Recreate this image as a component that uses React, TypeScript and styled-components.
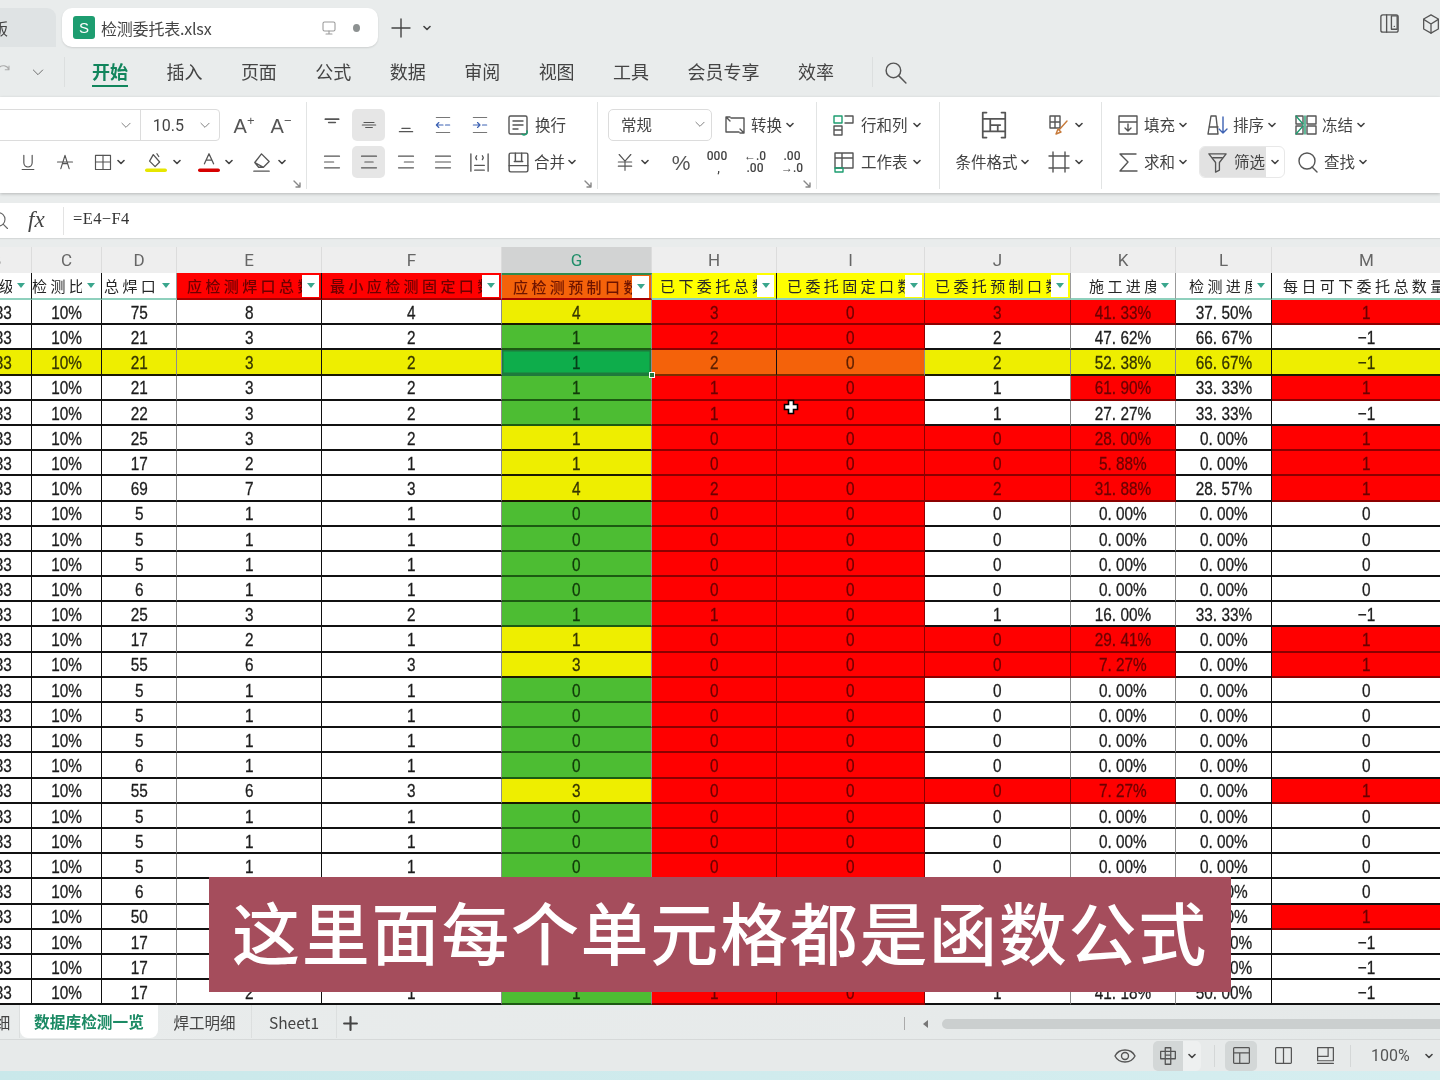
import React from 'react';
import styled, { createGlobalStyle } from 'styled-components';

const CJK = '"Noto Sans CJK SC", "Noto Sans", sans-serif';

const Global = createGlobalStyle`
  html, body { margin: 0; padding: 0; background: #e9ecec; }
  * { box-sizing: border-box; }
`;

const Page = styled.div`
  position: relative;
  width: 1440px;
  height: 1080px;
  overflow: hidden;
  display: flex;
  flex-direction: column;
  background: #e9ecec;
  font-family: ${CJK};
  color: #444;
  filter: blur(0.35px);
`;

const Svg = styled.svg<{ $c?: string }>`
  flex: none;
  fill: none;
  stroke: ${p => p.$c || '#555'};
  stroke-width: 1.4;
  stroke-linecap: round;
  stroke-linejoin: round;
`;

const Ico = ({ s = 22, c, children }: { s?: number; c?: string; children: React.ReactNode }) => (
  <Svg width={s} height={s} viewBox="0 0 24 24" $c={c}>{children}</Svg>
);

const Caret = () => (
  <Svg width={8} height={6} viewBox="0 0 8 6" $c="#444" style={{ strokeWidth: 1.6 }}><path d="M1 1.5 L4 4.5 L7 1.5" /></Svg>
);

const Chevron = ({ s = 14 }: { s?: number }) => (
  <Ico s={s} c="#666"><path d="M5 9l7 7 7-7" /></Ico>
);

/* ---------- title bar ---------- */
const TitleBar = styled.div`
  height: 47px;
  flex: none;
  display: flex;
  align-items: flex-end;
`;
const OldTab = styled.div`
  width: 56px;
  height: 39px;
  background: #dfe3e4;
  border-radius: 0 9px 0 0;
  display: flex;
  align-items: center;
  overflow: hidden;
  font-size: 16px;
  span { margin-left: -8px; }
`;
const ActiveTab = styled.div`
  width: 316px;
  height: 39px;
  margin-left: 6px;
  background: #fff;
  border-radius: 10px;
  display: flex;
  align-items: center;
  padding-left: 11px;
  box-shadow: 0 1px 2px rgba(0, 0, 0, 0.12);
`;
const SheetLogo = styled.div`
  width: 22px;
  height: 23px;
  border-radius: 3px;
  background: #1d9d70;
  color: #fff;
  font: 15px "Liberation Sans", sans-serif;
  display: flex;
  align-items: center;
  justify-content: center;
`;
const TabTitle = styled.div`
  margin-left: 6px;
  width: 219px;
  font-size: 16px;
  letter-spacing: -0.2px;
  color: #444;
`;
const StatusDot = styled.div`
  width: 7px;
  height: 8px;
  border-radius: 50%;
  background: #8d9191;
  margin-left: 15px;
`;
const NewTab = styled.div`
  display: flex;
  align-items: center;
  gap: 10px;
  height: 39px;
  margin-left: 11px;
`;
const TitleRight = styled.div`
  margin-left: auto;
  height: 47px;
  display: flex;
  align-items: center;
  gap: 19px;
  margin-right: -2px;
`;

/* ---------- menu ---------- */
const MenuBar = styled.div`
  height: 50px;
  flex: none;
  display: flex;
  align-items: center;
`;
const QuickTools = styled.div`
  width: 65px;
  height: 30px;
  display: flex;
  align-items: center;
  gap: 18px;
  border-right: 1px solid #dcdfdf;
  svg:first-child { margin-left: -6px; }
`;
const MenuList = styled.div`
  display: flex;
  gap: 38.45px;
  margin-left: 27px;
  height: 50px;
  padding-bottom: 2px;
  align-items: center;
`;
const MenuItem = styled.div<{ $on?: boolean }>`
  position: relative;
  font-size: 18px;
  line-height: 24px;
  color: ${p => (p.$on ? '#11855c' : '#444')};
  font-weight: ${p => (p.$on ? 700 : 400)};
  &::after {
    content: '';
    display: ${p => (p.$on ? 'block' : 'none')};
    position: absolute;
    left: 0;
    right: 0;
    bottom: -4px;
    height: 2px;
    background: #11855c;
  }
`;
const MenuSearch = styled.div`
  margin-left: 38px;
  height: 30px;
  padding-left: 10px;
  border-left: 1px solid #dcdfdf;
  display: flex;
  align-items: center;
`;

/* ---------- ribbon ---------- */
const Ribbon = styled.div`
  height: 96px;
  flex: none;
  display: flex;
  background: #fff;
  box-shadow: 0 1px 3px rgba(0, 0, 0, 0.22);
  position: relative;
  overflow: hidden;
`;
const Group = styled.div<{ $w: number }>`
  position: relative;
  flex: none;
  width: ${p => p.$w}px;
  display: flex;
  flex-direction: column;
  gap: 5px;
  padding-top: 12px;
`;
const Sep = styled.div`
  flex: none;
  width: 1px;
  margin: 5px 0 4px;
  background: #e2e4e4;
`;
const ToolRow = styled.div`
  height: 32px;
  display: flex;
  align-items: center;
`;
const Slot = styled.div<{ $w?: number; $ml?: number; $on?: boolean; $gap?: number }>`
  flex: none;
  height: 32px;
  ${p => (p.$w ? `width:${p.$w}px;` : '')}
  margin-left: ${p => p.$ml || 0}px;
  display: flex;
  align-items: center;
  justify-content: ${p => (p.$w ? 'center' : 'flex-start')};
  gap: ${p => p.$gap ?? 4}px;
  border-radius: 5px;
  background: ${p => (p.$on ? '#e6e6e6' : 'transparent')};
`;
const ToolText = styled.span`
  font-size: 15.5px;
  line-height: 20px;
  margin-top: -2px;
  white-space: nowrap;
  color: #444;
`;
const Combo = styled.div`
  display: flex;
  height: 32px;
  margin-left: -10px;
  border: 1px solid #dcdcdc;
  border-radius: 4px;
`;
const ComboPart = styled.div<{ $w: number; $line?: boolean }>`
  width: ${p => p.$w}px;
  display: flex;
  align-items: center;
  justify-content: flex-end;
  padding-right: 7px;
  border-left: ${p => (p.$line ? '1px solid #dcdcdc' : 'none')};
  font: 16px Roboto, sans-serif;
  color: #444;
  span { margin-right: 14px; }
`;
const SelectBox = styled.div<{ $ml: number }>`
  margin-left: ${p => p.$ml}px;
  width: 104px;
  height: 32px;
  border: 1px solid #dcdcdc;
  border-radius: 5px;
  padding: 0 4px 2px 12px;
  display: flex;
  align-items: center;
  justify-content: space-between;
  font-size: 15.5px;
`;
const Launcher = styled.div`
  position: absolute;
  right: 4px;
  bottom: 4px;
  line-height: 0;
`;
const SplitButton = styled.div`
  margin-left: 12px;
  width: 86px;
  height: 32px;
  display: flex;
  border: 1px solid #e8e8e8;
  border-radius: 6px;
  overflow: hidden;
`;
const SplitMain = styled.div`
  width: 66px;
  background: #e2e2e2;
  display: flex;
  align-items: center;
  gap: 5px;
  padding-left: 6px;
`;
const SplitRest = styled.div`
  flex: 1;
  display: flex;
  align-items: center;
  justify-content: center;
`;
const LetterIcon = styled.span<{ $size?: number }>`
  font: ${p => p.$size || 18}px "Liberation Sans", sans-serif;
  color: #555;
  line-height: 1;
`;
const Glyph = styled.span<{ $size?: number }>`
  font: ${p => p.$size || 12}px/1 Roboto, sans-serif;
  color: #444;
  white-space: pre;
  text-align: center;
  font-weight: 500;
`;

/* ---------- formula ---------- */
const Band = styled.div<{ $h: number }>`
  height: ${p => p.$h}px;
  flex: none;
`;
const FormulaBar = styled.div`
  height: 35px;
  flex: none;
  background: #fff;
  display: flex;
  align-items: center;
  box-shadow: 0 1px 1px rgba(0, 0, 0, 0.08);
`;
const FormulaLeft = styled.div`
  width: 74px;
  height: 28px;
  margin-left: -10px;
  display: flex;
  align-items: center;
  gap: 18px;
  border-right: 1px solid #e3e3e3;
`;
const Fx = styled.span`
  font: italic 23px "Liberation Serif", serif;
  color: #444;
  margin-top: -2px;
`;
const FormulaText = styled.span`
  margin-left: 9px;
  margin-top: -3px;
  font: 16.5px "Liberation Serif", serif;
  letter-spacing: 0.4px;
  color: #333;
`;

/* ---------- sheet ---------- */
const COLS = '71px 70px 75px 145px 180px 150px 125px 148px 146px 105px 96px 190px';

const SheetArea = styled.div`
  position: relative;
  flex: none;
  height: 758px;
  overflow: hidden;
  background: #fff;
`;
const Grid = styled.div`
  width: 1501px;
  margin-left: -39px;
  display: grid;
  grid-template-columns: ${COLS};
  grid-template-rows: 26px 27px repeat(28, 25.2px);
`;
const ColLetter = styled.div<{ $on?: boolean }>`
  display: flex;
  align-items: center;
  justify-content: center;
  background: ${p => (p.$on ? '#d2d3d3' : '#eeeeee')};
  border-right: 1px solid #dcdcdc;
  color: ${p => (p.$on ? '#1f8d68' : '#666')};
  font: 17px Roboto, sans-serif;
`;
const HEAD: Record<string, string> = { w: '#ffffff', r: '#ff0000', o: '#f4620a', y: '#ffff00' };
const HeadCell = styled.div<{ $t: string; $pad: number; $dark?: boolean }>`
  min-width: 0;
  display: flex;
  align-items: center;
  padding: 0 2px 0 ${p => p.$pad}px;
  background: ${p => HEAD[p.$t]};
  border-right: 1px solid ${p => (p.$dark ? '#111' : '#9a9a9a')};
  border-bottom: 2px solid ${p => (p.$t === 'w' || p.$t === 'y' ? '#8fd0bd' : '#a80000')};
  ${p => (p.$t === 'o' ? 'border-top: 2px solid #2f8a4e;' : '')}
  color: ${p => (p.$t === 'r' ? '#6e0000' : p.$t === 'o' ? '#6e1400' : '#262626')};
  font-weight: ${p => (p.$t === 'r' || p.$t === 'o' ? 500 : 400)};
`;
const HeadText = styled.div`
  flex: 1;
  min-width: 0;
  overflow: hidden;
  white-space: nowrap;
  font-size: 15px;
  line-height: 22px;
  letter-spacing: 3.4px;
`;
const FilterBtn = styled.div`
  flex: none;
  width: 17px;
  height: 22px;
  background: #fff;
  display: flex;
  align-items: center;
  justify-content: center;
  &::after {
    content: '';
    width: 0;
    height: 0;
    border-left: 4px solid transparent;
    border-right: 4px solid transparent;
    border-top: 5px solid #3aa68d;
  }
`;
const TONE: Record<string, { bg: string; fg: string; line: string }> = {
  w: { bg: '#ffffff', fg: '#1c1c1c', line: '#111111' },
  r: { bg: '#ff0000', fg: '#6c0000', line: '#8c0000' },
  y: { bg: '#eeee00', fg: '#343400', line: '#1a1a00' },
  g: { bg: '#4dbd33', fg: '#113a09', line: '#1c5a12' },
  d: { bg: '#0ead4b', fg: '#063d1a', line: '#1e7a3c' },
  o: { bg: '#f4620a', fg: '#5c2000', line: '#7a3000' },
};
const Cell = styled.div<{ $t: string; $dark?: boolean; $sel?: boolean; $align?: string }>`
  position: relative;
  min-width: 0;
  display: flex;
  align-items: center;
  justify-content: center;
  padding-top: 3px;
  background: ${p => TONE[p.$t].bg};
  color: ${p => TONE[p.$t].fg};
  border-bottom: 2px solid ${p => TONE[p.$t].line};
  border-right: 1px solid ${p => (p.$t === 'r' ? '#8c0000' : p.$dark ? '#111' : '#8d8d8d')};
  ${p => (p.$sel ? 'box-shadow: inset 0 0 0 1.5px #1e7a3c;' : '')}
  ${p => (p.$align === 'end' ? 'justify-content: flex-end; padding-right: 17px;' : '')}
`;
const Num = styled.span`
  display: inline-block;
  font: 18.5px/1 "Liberation Sans", sans-serif;
  -webkit-text-stroke: 0.3px currentColor;
  transform: scaleX(0.83);
  white-space: pre;
`;
const FillHandle = styled.div`
  position: absolute;
  right: -4px;
  bottom: -4px;
  width: 6px;
  height: 6px;
  background: #1e7a3c;
  border: 1px solid #fff;
  z-index: 2;
`;
const Cursor = styled.svg`
  position: absolute;
  left: 783px;
  top: 152px;
  z-index: 3;
`;

/* ---------- bottom ---------- */
const SheetBar = styled.div`
  height: 35px;
  flex: none;
  display: flex;
  align-items: flex-start;
  border-bottom: 1px solid #d6d9d9;
  background: linear-gradient(90deg, #e9ecec, #e5e9e9);
`;
const SheetTab = styled.div<{ $on?: boolean; $w: number }>`
  flex: none;
  width: ${p => p.$w}px;
  height: 33px;
  display: flex;
  align-items: center;
  justify-content: center;
  overflow: hidden;
  font-size: ${p => (p.$on ? 15.7 : 15.5)}px;
  font-weight: ${p => (p.$on ? 600 : 400)};
  color: ${p => (p.$on ? '#1b8a64' : '#444')};
  background: ${p => (p.$on ? '#fff' : 'transparent')};
  border-radius: ${p => (p.$on ? '0 0 8px 8px' : '0')};
  border-right: ${p => (p.$on ? 'none' : '1px solid #dcdfdf')};
`;
const ClippedTab = styled.span`
  margin-left: -14px;
`;
const AddSheet = styled.div`
  margin-left: 5px;
  height: 33px;
  padding-top: 3px;
  display: flex;
  align-items: center;
`;
const ScrollWrap = styled.div`
  margin-left: auto;
  height: 33px;
  width: 536px;
  display: flex;
  align-items: center;
  margin-top: 2px;
`;
const Tick = styled.div`
  width: 1px;
  height: 13px;
  background: #aaa;
`;
const ArrowLeft = styled.div`
  margin-left: 18px;
  width: 0;
  height: 0;
  border-top: 4px solid transparent;
  border-bottom: 4px solid transparent;
  border-right: 5px solid #777;
`;
const Thumb = styled.div`
  margin-left: 14px;
  flex: 1;
  height: 10px;
  border-radius: 5px 0 0 5px;
  background: #cbcfcf;
`;
const StatusBar = styled.div`
  height: 31px;
  flex: none;
  display: flex;
  align-items: center;
  justify-content: flex-end;
  background: #e7eaea;
`;
const ReadBtn = styled.div`
  width: 48px;
  height: 30px;
  margin-left: 16px;
  display: flex;
  border-radius: 5px;
  overflow: hidden;
  background: #eef0f0;
`;
const ReadMain = styled.div`
  width: 30px;
  background: #d3d7d7;
  display: flex;
  align-items: center;
  justify-content: center;
`;
const ReadRest = styled.div`
  flex: 1;
  display: flex;
  align-items: center;
  justify-content: center;
`;
const StatusSep = styled.div<{ $ml: number }>`
  width: 1px;
  height: 22px;
  background: #d4d7d7;
  margin-left: ${p => p.$ml}px;
`;
const ViewBtn = styled.div<{ $on?: boolean; $ml?: number }>`
  width: 32px;
  height: 30px;
  margin-left: ${p => p.$ml || 0}px;
  border-radius: 5px;
  display: flex;
  align-items: center;
  justify-content: center;
  background: ${p => (p.$on ? '#d3d7d7' : 'transparent')};
`;
const Zoom = styled.div`
  margin-left: 20px;
  width: 69px;
  display: flex;
  align-items: center;
  gap: 15px;
  font: 16px Roboto, sans-serif;
  color: #555;
  white-space: nowrap;
  overflow: hidden;
`;
const Strip = styled.div`
  height: 9px;
  flex: none;
  background: linear-gradient(90deg, #c9e8ea, #d6eef0);
`;
const Caption = styled.div`
  position: absolute;
  left: 209px;
  top: 877px;
  width: 1022px;
  height: 115px;
  padding-bottom: 8px;
  background: #a54d5c;
  color: #fff;
  z-index: 4;
  display: flex;
  align-items: center;
  justify-content: center;
  font-size: 68px;
  font-weight: 500;
  letter-spacing: 1.7px;
  line-height: 1;
  white-space: nowrap;
`;
const Sup = styled.sup`
  font-size: 13px;
`;

/* ---------- data ---------- */
const letters = ['B', 'C', 'D', 'E', 'F', 'G', 'H', 'I', 'J', 'K', 'L', 'M'];
const darkEdge = [true, true, false, true, false, false, true, false, false, false, true, false];
const heads: [string, string, number][] = [
  ['级', 'w', 38],
  ['检测比', 'w', 0],
  ['总焊口', 'w', 2],
  ['应检测焊口总数', 'r', 10],
  ['最小应检测固定口数', 'r', 8],
  ['应检测预制口数', 'o', 11],
  ['已下委托总数', 'y', 8],
  ['已委托固定口数', 'y', 10],
  ['已委托预制口数', 'y', 10],
  ['施工进度', 'w', 18],
  ['检测进度', 'w', 13],
  ['每日可下委托总数量', 'w', 11],
];
type R = { d: number; e: number; f: number; g: number; h: number; j: number; k: string; l: string; m: number; hot?: string; gy?: boolean };
const mk = (d: number, e: number, f: number, g: number, h: number, j: number, k: string, l: string, m: number, hot = '', gy = false): R => ({ d, e, f, g, h, j, k, l, m, hot, gy });
const z = '0. 00%';
const rows: R[] = [
  mk(75, 8, 4, 4, 3, 3, '41. 33%', '37. 50%', 1, 'jkm', true),
  mk(21, 3, 2, 1, 2, 2, '47. 62%', '66. 67%', -1),
  mk(21, 3, 2, 1, 2, 2, '52. 38%', '66. 67%', -1, 'row'),
  mk(21, 3, 2, 1, 1, 1, '61. 90%', '33. 33%', 1, 'km'),
  mk(22, 3, 2, 1, 1, 1, '27. 27%', '33. 33%', -1),
  mk(25, 3, 2, 1, 0, 0, '28. 00%', z, 1, 'jkm', true),
  mk(17, 2, 1, 1, 0, 0, '5. 88%', z, 1, 'jkm', true),
  mk(69, 7, 3, 4, 2, 2, '31. 88%', '28. 57%', 1, 'jkm', true),
  mk(5, 1, 1, 0, 0, 0, z, z, 0),
  mk(5, 1, 1, 0, 0, 0, z, z, 0),
  mk(5, 1, 1, 0, 0, 0, z, z, 0),
  mk(6, 1, 1, 0, 0, 0, z, z, 0),
  mk(25, 3, 2, 1, 1, 1, '16. 00%', '33. 33%', -1),
  mk(17, 2, 1, 1, 0, 0, '29. 41%', z, 1, 'jkm', true),
  mk(55, 6, 3, 3, 0, 0, '7. 27%', z, 1, 'jkm', true),
  mk(5, 1, 1, 0, 0, 0, z, z, 0),
  mk(5, 1, 1, 0, 0, 0, z, z, 0),
  mk(5, 1, 1, 0, 0, 0, z, z, 0),
  mk(6, 1, 1, 0, 0, 0, z, z, 0),
  mk(55, 6, 3, 3, 0, 0, '7. 27%', z, 1, 'jkm', true),
  mk(5, 1, 1, 0, 0, 0, z, z, 0),
  mk(5, 1, 1, 0, 0, 0, z, z, 0),
  mk(5, 1, 1, 0, 0, 0, z, z, 0),
  mk(6, 1, 1, 0, 0, 0, z, z, 0),
  mk(50, 5, 3, 2, 0, 0, '10. 00%', z, 1, 'jkm', true),
  mk(17, 2, 1, 1, 1, 1, '41. 18%', '50. 00%', -1),
  mk(17, 2, 1, 1, 1, 1, '41. 18%', '50. 00%', -1),
  mk(17, 2, 1, 1, 1, 1, '41. 18%', '50. 00%', -1),
];

const rowCells = (r: R, i: number) => {
  const isRow = r.hot === 'row';
  const hot = (k: string) => (r.hot || '').includes(k) && !isRow;
  const base = isRow ? 'y' : 'w';
  const vals: [string, string][] = [
    ['33', base],
    ['10%', base],
    [String(r.d), base],
    [String(r.e), base],
    [String(r.f), base],
    [String(r.g), isRow ? 'd' : r.gy ? 'y' : 'g'],
    [String(r.h), isRow ? 'o' : 'r'],
    ['0', isRow ? 'o' : 'r'],
    [String(r.j), hot('j') ? 'r' : base],
    [r.k, hot('k') ? 'r' : base],
    [r.l, base],
    [r.m < 0 ? '−1' : String(r.m), hot('m') ? 'r' : base],
  ];
  return vals.map(([v, t], c) => (
    <Cell key={`${i}-${c}`} $t={t} $dark={darkEdge[c]} $sel={isRow && c === 5} $align={c === 0 ? 'end' : undefined}>
      <Num>{v}</Num>
      {isRow && c === 5 && <FillHandle />}
    </Cell>
  ));
};

const menu = ['插入', '页面', '公式', '数据', '审阅', '视图', '工具', '会员专享', '效率'];

const Launch = () => (
  <Launcher>
    <Svg width={9} height={9} viewBox="0 0 9 9" $c="#888"><path d="M1 1l6 6M7 3v4H3" /></Svg>
  </Launcher>
);

export default function App() {
  return (
    <Page>
      <Global />
      <TitleBar>
        <OldTab><span>版</span></OldTab>
        <ActiveTab>
          <SheetLogo>S</SheetLogo>
          <TabTitle>检测委托表.xlsx</TabTitle>
          <Ico s={18} c="#999"><rect x="4" y="4" width="16" height="12" rx="2" /><path d="M12 16v4M8 20h8" /></Ico>
          <StatusDot />
        </ActiveTab>
        <NewTab>
          <Ico s={24} c="#444"><path d="M12 3v18M3 12h18" /></Ico>
          <Caret />
        </NewTab>
        <TitleRight>
          <Ico s={23} c="#555"><rect x="3" y="3" width="18" height="18" rx="2" /><path d="M9 3v18M14 4h6v14h-6z" /><path d="M17 15h.1" /></Ico>
          <Ico s={22} c="#555"><path d="M12 2l8 4.5v11L12 22l-8-4.5v-11z" /><path d="M4 7l8 5 8-5M12 12v10" /></Ico>
        </TitleRight>
      </TitleBar>

      <MenuBar>
        <QuickTools>
          <Ico s={18} c="#aaa"><path d="M20 9a8 8 0 0 0-14-2M20 4v5h-5" /></Ico>
          <Chevron s={16} />
        </QuickTools>
        <MenuList>
          <MenuItem $on>开始</MenuItem>
          {menu.map(m => <MenuItem key={m}>{m}</MenuItem>)}
        </MenuList>
        <MenuSearch>
          <Ico s={25} c="#555"><circle cx="10" cy="10" r="7" /><path d="M15 15l7 7" /></Ico>
        </MenuSearch>
      </MenuBar>

      <Ribbon>
        <Group $w={306}>
          <ToolRow>
            <Combo>
              <ComboPart $w={149}><Chevron /></ComboPart>
              <ComboPart $w={79} $line><span>10.5</span><Chevron /></ComboPart>
            </Combo>
            <Slot $w={36} $ml={6}><LetterIcon $size={20}>A<Sup>+</Sup></LetterIcon></Slot>
            <Slot $w={36} $ml={1}><LetterIcon $size={20}>A<Sup>−</Sup></LetterIcon></Slot>
          </ToolRow>
          <ToolRow>
            <Slot $w={36} $ml={10}><Ico s={20}><path d="M7 4v9a5 5 0 0 0 10 0V4M5 21h14" /></Ico></Slot>
            <Slot $w={36} $ml={1}><Ico s={20}><path d="M7 20l5-16 5 16M3 12h18M9 14h6" /></Ico></Slot>
            <Slot $ml={10}><Ico s={20}><rect x="3" y="4" width="18" height="17" /><path d="M12 4v17M3 12h18" /></Ico><Caret /></Slot>
            <Slot $ml={20} $gap={6}><Ico s={22}><path d="M9 4l7 8-5 5-6-6zM13 3l2 3" /><path d="M2 21h20" stroke="#e6e600" strokeWidth="4" /></Ico><Caret /></Slot>
            <Slot $ml={17} $gap={5}><Ico s={22}><path d="M7 14l5-11 5 11M9 10h6" /><path d="M2 21h20" stroke="#d60000" strokeWidth="4" /></Ico><Caret /></Slot>
            <Slot $ml={17} $gap={5}><Ico s={23}><path d="M12 3l8 8-6 6H9l-4-5zM5 12l9 5M4 21h16" /></Ico><Caret /></Slot>
          </ToolRow>
          <Launch />
        </Group>
        <Sep />
        <Group $w={290}>
          <ToolRow>
            <Slot $w={33} $ml={8}><Ico s={20}><path d="M4 5h16M8 9h8" strokeWidth="2" /></Ico></Slot>
            <Slot $w={33} $ml={4} $on><Ico s={20}><path d="M6 9h12M4 12h16M8 15h8" /></Ico></Slot>
            <Slot $w={33} $ml={4}><Ico s={20}><path d="M7 16h10M4 20h16" /></Ico></Slot>
            <Slot $w={33} $ml={4}><Ico s={20} c="#3d62b3"><path d="M4 3h16M4 21h16" stroke="#777" /><path d="M4 12h8M4 12l3-3M4 12l3 3M15 12h5" /></Ico></Slot>
            <Slot $w={33} $ml={4}><Ico s={20} c="#3d62b3"><path d="M4 3h16M4 21h16" stroke="#777" /><path d="M4 12h8M12 12l-3-3M12 12l-3 3M15 12h5" /></Ico></Slot>
            <Slot $ml={10} $gap={5}><Ico s={24}><rect x="3" y="3" width="18" height="18" rx="1.5" /><path d="M7 8h10M7 12h10M7 16h5" /><path d="M16 21a3 3 0 0 0 5-3" stroke="#1d9d70" /></Ico><ToolText>换行</ToolText></Slot>
          </ToolRow>
          <ToolRow>
            <Slot $w={33} $ml={8}><Ico s={20}><path d="M3 5h18M3 12h11M3 19h18" /></Ico></Slot>
            <Slot $w={33} $ml={4} $on><Ico s={20}><path d="M3 5h18M7 12h10M3 19h18" /></Ico></Slot>
            <Slot $w={33} $ml={4}><Ico s={20}><path d="M3 5h18M10 12h11M3 19h18" /></Ico></Slot>
            <Slot $w={33} $ml={4}><Ico s={20}><path d="M3 5h18M3 12h18M3 19h18" /></Ico></Slot>
            <Slot $w={33} $ml={4}><Ico s={23}><path d="M3 3v18M21 3v18M7 20h10M7 15h10M9 5l-1 2 1 2M15 5l1 2-1 2" /></Ico></Slot>
            <Slot $ml={10} $gap={3}><Ico s={25}><rect x="3" y="3" width="18" height="18" rx="1.5" /><path d="M3 15h18M9 3v8M15 3v8M8 11h8" /></Ico><ToolText>合并</ToolText><Caret /></Slot>
          </ToolRow>
          <Launch />
        </Group>
        <Sep />
        <Group $w={218}>
          <ToolRow>
            <SelectBox $ml={10}>常规<Chevron /></SelectBox>
            <Slot $ml={11} $gap={4}><Ico s={24}><path d="M7 4H3v5M3 4l4 4M3 9v10M17 20h4v-5M21 20l-4-4M21 15V5H8M4 19h12" /></Ico><ToolText>转换</ToolText><Caret /></Slot>
          </ToolRow>
          <ToolRow>
            <Slot $ml={17} $gap={6}><Ico s={20}><path d="M5 3l7 8 7-8M4 12h16M4 17h16M12 11v11" /></Ico><Caret /></Slot>
            <Slot $w={30} $ml={17}><LetterIcon $size={21}>%</LetterIcon></Slot>
            <Slot $w={30} $ml={6}><Glyph $size={12}>{'000\n ,'}</Glyph></Slot>
            <Slot $w={30} $ml={8}><Glyph $size={12}>{'←.0\n.00'}</Glyph></Slot>
            <Slot $w={30} $ml={7}><Glyph $size={12}>{'.00\n→.0'}</Glyph></Slot>
          </ToolRow>
          <Launch />
        </Group>
        <Sep />
        <Group $w={122}>
          <ToolRow>
            <Slot $ml={15} $gap={5}><Ico s={24}><rect x="2" y="3" width="8" height="7" stroke="#1d9d70" /><path d="M13 3h8v7h-8M2 13h8v9H2zM2 17h8" /></Ico><ToolText>行和列</ToolText><Caret /></Slot>
          </ToolRow>
          <ToolRow>
            <Slot $ml={15} $gap={5}><Ico s={24}><path d="M3 3h18v15H3zM3 8h18M10 3v15" /><rect x="3" y="18" width="8" height="4" stroke="#1d9d70" /></Ico><ToolText>工作表</ToolText><Caret /></Slot>
          </ToolRow>
        </Group>
        <Sep />
        <Group $w={161}>
          <ToolRow>
            <Slot $w={107}><Ico s={30}><path d="M6 2H3v20h3M18 2h3v20h-3M3 7h18M3 17h18M9 7v10M9 12h8M15 12v5" /></Ico></Slot>
            <Slot $gap={4}><Ico s={24}><path d="M3 3h10v12H3zM3 9h10M8 3v12" /><path d="M20 8l-8 9M11 16l-2 5 5-2z" stroke="#c77a3a" /></Ico><Caret /></Slot>
          </ToolRow>
          <ToolRow>
            <Slot $w={104} $gap={3}><ToolText>条件格式</ToolText><Caret /></Slot>
            <Slot $gap={4} $ml={3}><Ico s={24}><path d="M6 2v20M18 2v20M2 6h20M2 18h20" /></Ico><Caret /></Slot>
          </ToolRow>
        </Group>
        <Sep />
        <Group $w={338}>
          <ToolRow>
            <Slot $ml={14} $gap={4}><Ico s={24}><path d="M3 3h18v18H3zM3 9h18M12 11v7M9 15l3 3 3-3" /></Ico><ToolText>填充</ToolText><Caret /></Slot>
            <Slot $ml={18} $gap={4}><Ico s={24}><path d="M3 21h10L11 3H6zM4 14h9" /><path d="M18 4v16M14 16l4 4 4-4" stroke="#3d62b3" /></Ico><ToolText>排序</ToolText><Caret /></Slot>
            <Slot $ml={18} $gap={4}><Ico s={24}><path d="M9 3H2v8h7zM9 13H2v8h7zM13 3h9v8h-9zM13 13h9v8h-9z" /><path d="M2 3l7 8M2 21l7-8M11 3v18" stroke="#1d9d70" /></Ico><ToolText>冻结</ToolText><Caret /></Slot>
          </ToolRow>
          <ToolRow>
            <Slot $ml={14} $gap={4}><Ico s={24}><path d="M20 4H4l8 8-8 9h17" /></Ico><ToolText>求和</ToolText><Caret /></Slot>
            <SplitButton>
              <SplitMain>
                <Ico s={23}><path d="M3 3h18l-7 9v8l-4 2V12z" /><path d="M7 7h10" /></Ico>
                <ToolText>筛选</ToolText>
              </SplitMain>
              <SplitRest><Caret /></SplitRest>
            </SplitButton>
            <Slot $ml={11} $gap={4}><Ico s={24}><circle cx="11" cy="11" r="8" /><path d="M16 17l5 5" /></Ico><ToolText>查找</ToolText><Caret /></Slot>
          </ToolRow>
        </Group>
      </Ribbon>

      <Band $h={10} />
      <FormulaBar>
        <FormulaLeft>
          <Ico s={20} c="#666"><circle cx="10" cy="10" r="8" /><path d="M16 16l5 5" /></Ico>
          <Fx>fx</Fx>
        </FormulaLeft>
        <FormulaText>=E4−F4</FormulaText>
      </FormulaBar>
      <Band $h={9} />

      <SheetArea>
        <Grid>
          {letters.map(l => <ColLetter key={l} $on={l === 'G'}>{l}</ColLetter>)}
          {heads.map(([t, tone, pad], i) => (
            <HeadCell key={t} $t={tone} $pad={pad} $dark={darkEdge[i]}>
              <HeadText>{t}</HeadText>
              <FilterBtn />
            </HeadCell>
          ))}
          {rows.map(rowCells)}
        </Grid>
        <Cursor width="16" height="16" viewBox="0 0 16 16">
          <path d="M5.5 1.5h5v4h4v5h-4v4h-5v-4h-4v-5h4z" fill="#fff" stroke="#000" strokeWidth="1.6" />
        </Cursor>
      </SheetArea>

      <SheetBar>
        <SheetTab $w={20}><ClippedTab>细</ClippedTab></SheetTab>
        <SheetTab $w={138} $on>数据库检测一览</SheetTab>
        <SheetTab $w={94}>焊工明细</SheetTab>
        <SheetTab $w={85}>Sheet1</SheetTab>
        <AddSheet><Ico s={17} c="#444"><path d="M12 3v18M3 12h18" strokeWidth="3" /></Ico></AddSheet>
        <ScrollWrap>
          <Tick />
          <ArrowLeft />
          <Thumb />
        </ScrollWrap>
      </SheetBar>
      <StatusBar>
        <Ico s={24} c="#555"><path d="M2 12c4-8 16-8 20 0-4 8-16 8-20 0z" /><circle cx="12" cy="12" r="3.5" /></Ico>
        <ReadBtn>
          <ReadMain><Ico s={22} c="#555"><path d="M9 3h6v18H9zM4 7h16v8H4zM9 11h6" /></Ico></ReadMain>
          <ReadRest><Caret /></ReadRest>
        </ReadBtn>
        <StatusSep $ml={13} />
        <ViewBtn $on $ml={10}><Ico s={21}><rect x="3" y="3" width="18" height="18" rx="1" /><path d="M3 9h18M10 9v12" /></Ico></ViewBtn>
        <ViewBtn $ml={10}><Ico s={21}><rect x="3" y="3" width="18" height="18" rx="1" /><path d="M12 3v18" /></Ico></ViewBtn>
        <ViewBtn $ml={10}><Ico s={21}><path d="M3 3h18v15H3zM21 3v15M3 21h18M15 3v10H3" /></Ico></ViewBtn>
        <StatusSep $ml={9} />
        <Zoom>100%<Caret /></Zoom>
      </StatusBar>
      <Strip />

      <Caption>这里面每个单元格都是函数公式</Caption>
    </Page>
  );
}
